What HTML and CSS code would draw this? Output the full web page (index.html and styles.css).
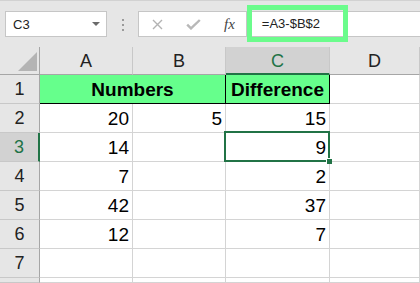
FILE: index.html
```html
<!DOCTYPE html>
<html lang="en">
  <head>
    <meta charset="UTF-8" />
    <title>Sheet</title>
    <link rel="stylesheet" href="styles.css">
  </head>
  <body>
    <div class="toolbar">
      <div class="name-box">
        <span>C3</span>
        <span class="caret"></span>
      </div>
      <div class="grip"><i></i><i></i><i></i></div>
      <div class="formula-bar">
        <svg class="fb-cancel" width="11" height="11" viewBox="0 0 11 11">
          <path d="M1 1 L10 10 M10 1 L1 10" stroke="#b3b3b3" stroke-width="1.4" fill="none" />
        </svg>
        <svg class="fb-enter" width="15" height="11" viewBox="0 0 15 11">
          <path d="M1.2 5.6 L5 9.4 L13.8 1" stroke="#b8b8b8" stroke-width="2.4" fill="none" />
        </svg>
        <span class="fx">fx</span>
        <div class="formula-input">=A3-$B$2</div>
      </div>
      <div class="callout"></div>
    </div>

    <div class="sheet">
      <div class="corner"><span class="select-all"></span></div>
      <div class="col-head">A</div>
      <div class="col-head">B</div>
      <div class="col-head active">C</div>
      <div class="col-head">D</div>

      <div class="row-head">1</div>
      <div class="cell title wide">Numbers</div>
      <div class="cell title boxed">Difference</div>
      <div class="cell"></div>

      <div class="row-head">2</div>
      <div class="cell">20</div>
      <div class="cell">5</div>
      <div class="cell">15</div>
      <div class="cell"></div>

      <div class="row-head active">3</div>
      <div class="cell">14</div>
      <div class="cell"></div>
      <div class="cell selected">9<span class="fill-handle"></span></div>
      <div class="cell"></div>

      <div class="row-head">4</div>
      <div class="cell">7</div>
      <div class="cell"></div>
      <div class="cell">2</div>
      <div class="cell"></div>

      <div class="row-head">5</div>
      <div class="cell">42</div>
      <div class="cell"></div>
      <div class="cell">37</div>
      <div class="cell"></div>

      <div class="row-head">6</div>
      <div class="cell">12</div>
      <div class="cell"></div>
      <div class="cell">7</div>
      <div class="cell"></div>

      <div class="row-head">7</div>
      <div class="cell"></div>
      <div class="cell"></div>
      <div class="cell"></div>
      <div class="cell"></div>

      <!-- row 8, only its top edge is in view -->
      <div class="row-head"></div>
      <div class="cell"></div>
      <div class="cell"></div>
      <div class="cell"></div>
      <div class="cell"></div>
    </div>
  </body>
</html>
```

FILE: styles.css
```css
body {
  margin: 0;
  width: 420px;
  height: 283px;
  overflow: hidden;
  background: #fff;
  font-family: "Liberation Sans", Arial, sans-serif;
  color: #000;
}

/* formula bar strip */

.toolbar {
  position: relative;
  display: flex;
  align-items: flex-start;
  height: 47px;
  box-sizing: border-box;
  padding: 10px 0 0 5px;
  background: #e6e6e6;
  border-top: 1px solid #d2d2d2;
}

.name-box {
  display: flex;
  align-items: center;
  justify-content: space-between;
  width: 102px;
  height: 26px;
  box-sizing: border-box;
  padding: 0 6px 0 7px;
  background: #fff;
  border: 1px solid #c6c6c6;
  font-size: 13px;
  color: #222;
}

.caret {
  width: 0;
  height: 0;
  border-left: 4px solid transparent;
  border-right: 4px solid transparent;
  border-top: 4px solid #6a6a6a;
}

.grip {
  display: flex;
  flex-direction: column;
  gap: 3px;
  margin: 8px 0 0 15px;
}

.grip i {
  display: block;
  width: 2px;
  height: 2px;
  background: #9a9a9a;
}

.formula-bar {
  flex: 1;
  display: flex;
  align-items: center;
  height: 26px;
  box-sizing: border-box;
  margin-left: 14px;
  background: #fff;
  border: 1px solid #c6c6c6;
  border-right: none;
}

.fb-cancel {
  margin-left: 13px;
}

.fb-enter {
  margin-left: 23px;
}

.fx {
  margin-left: 23px;
  font-family: "Liberation Serif", serif;
  font-style: italic;
  font-size: 15px;
  color: #444;
}

.formula-input {
  align-self: stretch;
  flex: 1;
  margin-left: 11px;
  padding-left: 15px;
  border-left: 1px solid #c6c6c6;
  font-size: 13px;
  line-height: 24px;
  color: #222;
}

.callout {
  position: absolute;
  left: 247px;
  top: 4px;
  width: 101px;
  height: 37px;
  box-sizing: border-box;
  border: 5px solid #6bfc8c;
}

/* grid */

.sheet {
  display: grid;
  grid-template-columns: 40px 93px 93px 104px 1fr;
  grid-template-rows: 28px repeat(7, 29px) 5px;
}

.corner {
  display: flex;
  justify-content: flex-end;
  align-items: flex-end;
  padding: 0 2px 3px 0;
  background: #e6e6e6;
  border-right: 1px solid #a6a6a6;
  border-bottom: 1px solid #a6a6a6;
}

.select-all {
  width: 0;
  height: 0;
  border-left: 19px solid transparent;
  border-bottom: 19px solid #b4b4b4;
}

.col-head {
  background: #e6e6e6;
  border-right: 1px solid #c8c8c8;
  border-bottom: 1px solid #a6a6a6;
  text-align: center;
  font-size: 18px;
  line-height: 28px;
  color: #222;
}

.col-head.active {
  background: #d2d2d2;
  border-bottom: 2px solid #217346;
  color: #217346;
}

.row-head {
  background: #e6e6e6;
  border-right: 1px solid #a6a6a6;
  border-bottom: 1px solid #c8c8c8;
  text-align: center;
  font-size: 18px;
  line-height: 29px;
  color: #222;
}

.row-head.active {
  background: #d2d2d2;
  border-right: 2px solid #217346;
  color: #217346;
}

.cell {
  position: relative;
  padding-right: 3px;
  border-right: 1px solid #d4d4d4;
  border-bottom: 1px solid #d4d4d4;
  text-align: right;
  font-size: 19px;
  line-height: 29px;
}

.cell.title {
  background: #66ff8c;
  text-align: center;
  font-weight: bold;
  padding-right: 0;
  border-bottom-color: #000;
}

.cell.wide {
  grid-column: span 2;
  border-right-color: #000;
}

.cell.boxed {
  border-right-color: #000;
}

.cell.selected::after {
  content: "";
  position: absolute;
  left: -2px;
  top: -2px;
  right: -1px;
  bottom: -1px;
  border: 2px solid #217346;
}

.fill-handle {
  position: absolute;
  right: -3px;
  bottom: -3px;
  z-index: 1;
  width: 5px;
  height: 5px;
  background: #217346;
  border: 1px solid #fff;
  border-width: 1px 0 0 1px;
}
```
